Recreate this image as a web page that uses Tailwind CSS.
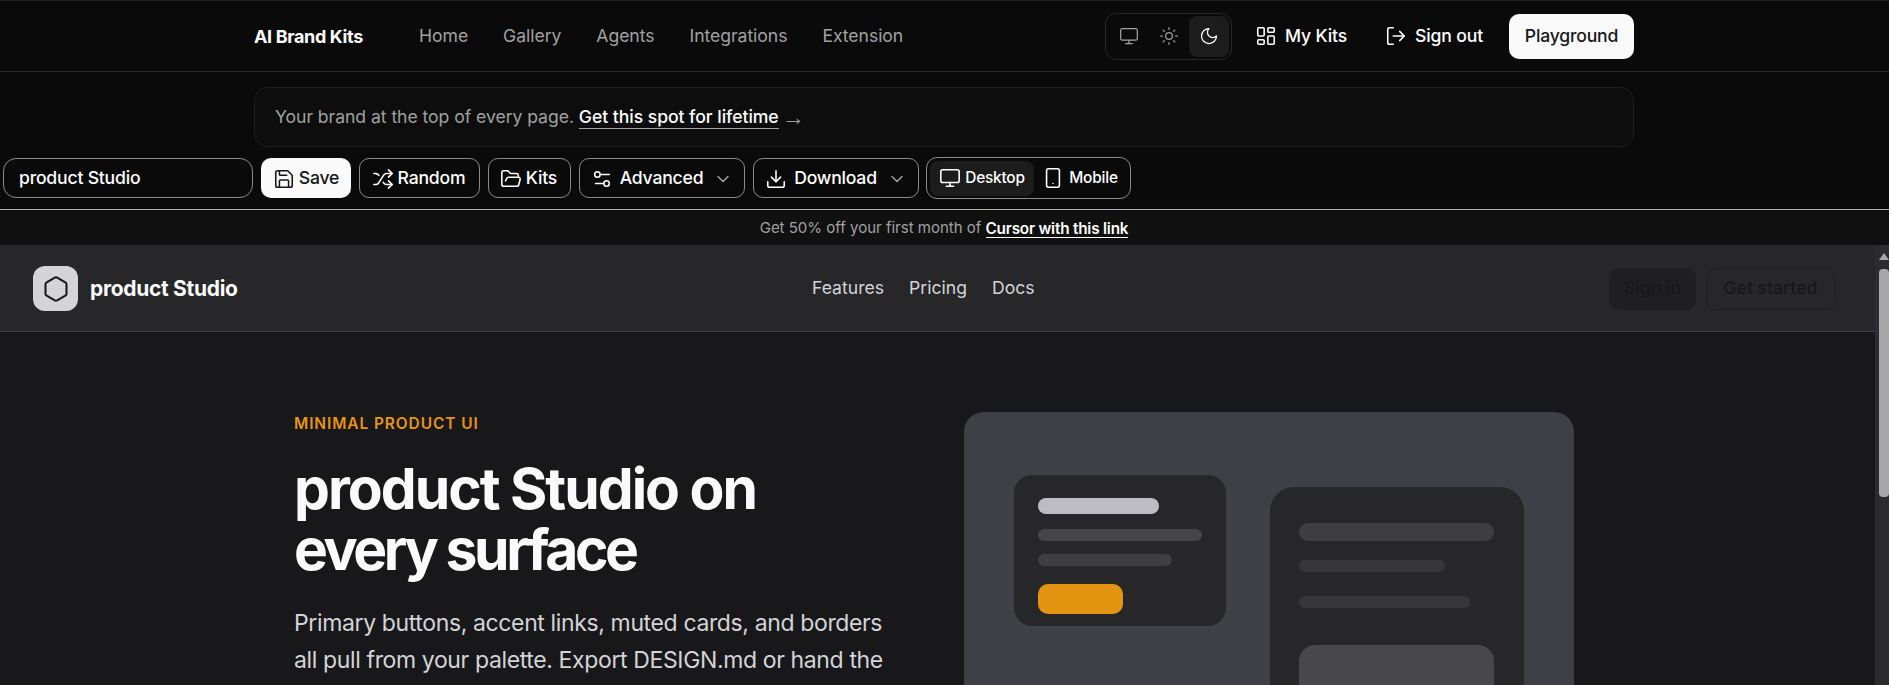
<!DOCTYPE html>
<html lang="en">
<head>
    <meta charset="UTF-8">
    <meta name="viewport" content="width=device-width, initial-scale=1.0">
    <title>AI Brand Kits</title>
    <script src="https://cdn.jsdelivr.net/npm/@tailwindcss/browser@4"></script>
</head>
<body class="bg-[#0a0a0a] font-['Inter',sans-serif] text-white">
<div class="h-[685px] w-[1889px] overflow-hidden flex flex-col">

    <!-- Site header -->
    <header class="h-[72px] shrink-0 border-t border-b border-t-[#1f1f1f] border-b-[#262626] flex items-center justify-between pl-[254px] pr-[255px]">
        <div class="flex items-center">
            <span class="w-[111px] text-[18px] font-bold tracking-[-0.35px] whitespace-nowrap">AI Brand Kits</span>
            <nav class="ml-[54px] flex items-center gap-[35px] text-[17.6px] tracking-[-0.05px] text-[#a1a1a1]">
                <a>Home</a>
                <a>Gallery</a>
                <a>Agents</a>
                <a>Integrations</a>
                <a>Extension</a>
            </nav>
        </div>
        <div class="flex items-center">
            <div class="h-[47px] w-[127px] border border-[#262626] rounded-[11px] flex items-center pl-[3px] text-[#a1a1a1]">
                <span class="w-[40px] h-[41px] flex items-center justify-center">
                    <svg class="w-[20px] h-[20px]" viewBox="0 0 24 24" fill="none" stroke="currentColor" stroke-width="1.5" stroke-linecap="round" stroke-linejoin="round"><rect x="2" y="3" width="20" height="14" rx="2"/><path d="M8 21h8M12 17v4"/></svg>
                </span>
                <span class="w-[40px] h-[41px] flex items-center justify-center">
                    <svg class="w-[20px] h-[20px]" viewBox="0 0 24 24" fill="none" stroke="currentColor" stroke-width="1.5" stroke-linecap="round" stroke-linejoin="round"><circle cx="12" cy="12" r="4"/><path d="M12 2v2M12 20v2M4.93 4.93l1.41 1.41M17.66 17.66l1.41 1.41M2 12h2M20 12h2M6.34 17.66l-1.41 1.41M19.07 4.93l-1.41 1.41"/></svg>
                </span>
                <span class="w-[40px] h-[41px] rounded-[8px] bg-[#1c1c1c] text-white flex items-center justify-center">
                    <svg class="w-[20px] h-[20px]" viewBox="0 0 24 24" fill="none" stroke="currentColor" stroke-width="1.5" stroke-linecap="round" stroke-linejoin="round"><path d="M12 3a6 6 0 0 0 9 9 9 9 0 1 1-9-9Z"/></svg>
                </span>
            </div>
            <a class="ml-[23px] flex items-center gap-[8px] text-[17.6px] font-medium tracking-[-0.15px]">
                <svg class="w-[22px] h-[22px]" viewBox="0 0 24 24" fill="none" stroke="currentColor" stroke-width="1.7" stroke-linecap="round" stroke-linejoin="round"><rect x="3" y="3" width="7" height="9" rx="1"/><rect x="14" y="3" width="7" height="5" rx="1"/><rect x="14" y="12" width="7" height="9" rx="1"/><rect x="3" y="16" width="7" height="5" rx="1"/></svg>
                My Kits
            </a>
            <a class="ml-[38px] flex items-center gap-[8px] text-[17.6px] font-medium tracking-[-0.15px]">
                <svg class="w-[22px] h-[22px]" viewBox="0 0 24 24" fill="none" stroke="currentColor" stroke-width="1.7" stroke-linecap="round" stroke-linejoin="round"><path d="M9 21H5a2 2 0 0 1-2-2V5a2 2 0 0 1 2-2h4"/><path d="m16 17 5-5-5-5"/><path d="M21 12H9"/></svg>
                Sign out
            </a>
            <a class="ml-[26px] h-[45px] w-[125px] rounded-[10px] bg-[#fafafa] text-[#171717] text-[17.6px] font-medium tracking-[-0.2px] flex items-center justify-center">Playground</a>
        </div>
    </header>

    <!-- Sponsor banner -->
    <div class="shrink-0 pt-[15px] pl-[254px] pr-[255px]">
        <div class="h-[60px] rounded-[13px] border border-[#1f1f1f] bg-[#0d0d0d] flex items-center pl-[20px] text-[17.6px] tracking-[-0.05px] text-[#a1a1a1] whitespace-nowrap">
            Your brand at the top of every page.&nbsp;<a class="text-white font-medium border-b border-[#a1a1a1] leading-[22px]">Get this spot for lifetime</a><span class="ml-[3px] font-['Liberation_Sans',sans-serif] text-[23px] leading-[22px]">→</span>
        </div>
    </div>

    <!-- Toolbar -->
    <div class="h-[63px] shrink-0 border-b border-[#b0b0b0] flex items-start pl-[3px] pt-[10px] gap-[8px] text-[17.6px] font-medium tracking-[-0.2px]">
        <div class="mt-[1px] h-[40px] w-[250px] rounded-[13px] border border-[#8a8a8a] flex items-center pl-[15px] pt-[1px]">product Studio</div>
        <button class="mt-[1px] h-[40px] w-[90px] rounded-[10px] bg-[#fafafa] text-[#171717] flex items-center justify-center gap-[4px] pt-[1px]">
            <svg class="w-[22px] h-[22px]" viewBox="0 0 24 24" fill="none" stroke="currentColor" stroke-width="1.7" stroke-linecap="round" stroke-linejoin="round"><path d="M15.2 3a2 2 0 0 1 1.4.6l3.8 3.8a2 2 0 0 1 .6 1.4V19a2 2 0 0 1-2 2H5a2 2 0 0 1-2-2V5a2 2 0 0 1 2-2z"/><path d="M17 21v-7a1 1 0 0 0-1-1H8a1 1 0 0 0-1 1v7"/><path d="M7 3v4a1 1 0 0 0 1 1h7"/></svg>
            Save
        </button>
        <button class="mt-[1px] h-[40px] w-[121px] rounded-[10px] border border-[#8a8a8a] flex items-center justify-center gap-[4px] pr-[2px] pt-[1px]">
            <svg class="w-[22px] h-[22px]" viewBox="0 0 24 24" fill="none" stroke="currentColor" stroke-width="1.7" stroke-linecap="round" stroke-linejoin="round"><path d="m18 14 4 4-4 4"/><path d="m18 2 4 4-4 4"/><path d="M2 18h1.973a4 4 0 0 0 3.3-1.7l5.454-8.6a4 4 0 0 1 3.3-1.7H22"/><path d="M2 6h1.972a4 4 0 0 1 3.6 2.2"/><path d="M22 18h-6.041a4 4 0 0 1-3.3-1.8l-.359-.45"/></svg>
            Random
        </button>
        <button class="mt-[1px] h-[40px] w-[83px] rounded-[10px] border border-[#8a8a8a] flex items-center justify-center gap-[4px] pr-[2px] pt-[1px]">
            <svg class="w-[22px] h-[22px]" viewBox="0 0 24 24" fill="none" stroke="currentColor" stroke-width="1.7" stroke-linecap="round" stroke-linejoin="round"><path d="m6 14 1.5-2.9A2 2 0 0 1 9.24 10H20a2 2 0 0 1 1.94 2.5l-1.54 6a2 2 0 0 1-1.95 1.5H4a2 2 0 0 1-2-2V5a2 2 0 0 1 2-2h3.9a2 2 0 0 1 1.69.9l.81 1.2a2 2 0 0 0 1.67.9H18a2 2 0 0 1 2 2v2"/></svg>
            Kits
        </button>
        <button class="mt-[1px] h-[40px] w-[166px] rounded-[10px] border border-[#8a8a8a] flex items-center justify-center gap-[7px] pt-[1px]">
            <svg class="w-[22px] h-[22px]" viewBox="0 0 24 24" fill="none" stroke="currentColor" stroke-width="1.7" stroke-linecap="round" stroke-linejoin="round"><path d="M20 7h-9"/><path d="M14 17H5"/><circle cx="17" cy="17" r="3"/><circle cx="7" cy="7" r="3"/></svg>
            Advanced
            <svg class="ml-[3px] w-[20px] h-[20px] text-[#a1a1a1]" viewBox="0 0 24 24" fill="none" stroke="currentColor" stroke-width="1.7" stroke-linecap="round" stroke-linejoin="round"><path d="m6 9 6 6 6-6"/></svg>
        </button>
        <button class="mt-[1px] h-[40px] w-[166px] rounded-[10px] border border-[#8a8a8a] flex items-center justify-center gap-[7px] pt-[1px]">
            <svg class="w-[22px] h-[22px]" viewBox="0 0 24 24" fill="none" stroke="currentColor" stroke-width="1.7" stroke-linecap="round" stroke-linejoin="round"><path d="M12 15V3"/><path d="M21 15v4a2 2 0 0 1-2 2H5a2 2 0 0 1-2-2v-4"/><path d="m7 10 5 5 5-5"/></svg>
            Download
            <svg class="ml-[3px] w-[20px] h-[20px] text-[#a1a1a1]" viewBox="0 0 24 24" fill="none" stroke="currentColor" stroke-width="1.7" stroke-linecap="round" stroke-linejoin="round"><path d="m6 9 6 6 6-6"/></svg>
        </button>
        <div class="ml-[-1px] h-[42px] w-[205px] rounded-[11px] border border-[#8a8a8a] flex items-center pl-[3px] text-[15.4px] font-medium tracking-[-0.2px]">
            <span class="h-[35px] w-[104px] rounded-[8px] bg-[#1c1c1c] flex items-center justify-center gap-[4px]">
                <svg class="w-[22px] h-[22px]" viewBox="0 0 24 24" fill="none" stroke="currentColor" stroke-width="1.7" stroke-linecap="round" stroke-linejoin="round"><rect x="2" y="3" width="20" height="14" rx="2"/><path d="M8 21h8M12 17v4"/></svg>
                Desktop
            </span>
            <span class="h-[35px] w-[92px] flex items-center justify-center gap-[5px]">
                <svg class="w-[22px] h-[22px]" viewBox="0 0 24 24" fill="none" stroke="currentColor" stroke-width="1.7" stroke-linecap="round" stroke-linejoin="round"><rect x="5" y="2" width="14" height="20" rx="2"/><path d="M12 18h.01"/></svg>
                Mobile
            </span>
        </div>
    </div>

    <!-- Promo strip -->
    <div class="h-[35px] shrink-0 bg-[#101010] flex items-center justify-center pr-[1px] pt-[2px] text-[15px] text-[#a1a1a1] whitespace-nowrap">
        Get 50% off your first month of&nbsp;<a class="text-white text-[15.3px] font-semibold border-b border-white leading-[17px] tracking-[-0.2px]">Cursor with this link</a>
    </div>

    <!-- Kit preview -->
    <div class="flex-1 min-h-0 flex bg-[#2c2c2e]">
        <div class="flex-1 min-w-0 bg-[#18181b] overflow-hidden">
            <div class="h-[87px] bg-[#27272a] border-b border-[#3f3f46] flex items-center pt-[1px] pl-[33px] pr-[40px]">
                <div class="w-[300px] shrink-0 flex items-center gap-[12px]">
                    <span class="w-[45px] h-[45px] rounded-[12px] bg-[#d4d4d8] text-[#18181b] flex items-center justify-center">
                        <svg class="w-[28px] h-[28px]" viewBox="0 0 24 24" fill="none" stroke="currentColor" stroke-width="1.75" stroke-linecap="round" stroke-linejoin="round"><path d="M21 16V8a2 2 0 0 0-1-1.73l-7-4a2 2 0 0 0-2 0l-7 4A2 2 0 0 0 3 8v8a2 2 0 0 0 1 1.73l7 4a2 2 0 0 0 2 0l7-4A2 2 0 0 0 21 16z"/></svg>
                    </span>
                    <span class="text-[21px] font-bold tracking-[-0.3px] text-[#fafafa] whitespace-nowrap">product Studio</span>
                </div>
                <nav class="ml-[479px] flex items-center gap-[25px] text-[17.6px] text-[#d4d4d8]">
                    <a>Features</a>
                    <a>Pricing</a>
                    <a>Docs</a>
                </nav>
                <div class="ml-auto flex items-center gap-[10px] text-[17.6px] font-semibold tracking-[-0.1px] text-[#18181b]">
                    <a class="h-[42px] w-[87px] rounded-[10px] bg-[#1f1f22] flex items-center justify-center">Sign in</a>
                    <a class="h-[42px] w-[129px] rounded-[10px] border border-[#1f1f22] flex items-center justify-center">Get started</a>
                </div>
            </div>

            <section class="flex pl-[294px] pt-[82px]">
                <div class="w-[600px] shrink-0">
                    <p class="text-[15.4px] leading-[20px] font-semibold tracking-[0.95px] text-[#e8960f]">MINIMAL PRODUCT UI</p>
                    <h1 class="mt-[24px] text-[57px] leading-[61px] font-bold text-[#fafafa] whitespace-nowrap">
                        <span class="block tracking-[-2.0px]">product Studio on</span>
                        <span class="block tracking-[-3.4px]">every surface</span>
                    </h1>
                    <p class="mt-[25px] text-[23px] leading-[37px] tracking-[-0.37px] text-[#d4d4d8] whitespace-nowrap">Primary buttons, accent links, muted cards, and borders<br>all pull from your palette. Export DESIGN.md or hand the</p>
                </div>
                <div class="ml-[70px] mt-[-2px] w-[610px] h-[400px] shrink-0 rounded-[20px] bg-[#3f3f46] flex items-start pl-[50px]">
                    <div class="mt-[63px] w-[212px] h-[151px] rounded-[18px] bg-[#27272a] pl-[24px] pt-[23px]">
                        <div class="h-[16px] w-[121px] rounded-full bg-[#bcbcc2]"></div>
                        <div class="mt-[15px] h-[12px] w-[164px] rounded-full bg-[#46464a]"></div>
                        <div class="mt-[13px] h-[12px] w-[134px] rounded-full bg-[#3f3f43]"></div>
                        <div class="mt-[18px] h-[30px] w-[85px] rounded-[10px] bg-[#e39410]"></div>
                    </div>
                    <div class="ml-[44px] mt-[75px] w-[254px] h-[320px] rounded-[24px] bg-[#27272a] pl-[29px] pt-[36px]">
                        <div class="h-[18px] w-[195px] rounded-full bg-[#3f3f43]"></div>
                        <div class="mt-[19px] h-[12px] w-[146px] rounded-full bg-[#37373a]"></div>
                        <div class="mt-[24px] h-[12px] w-[171px] rounded-full bg-[#37373a]"></div>
                        <div class="mt-[37px] h-[120px] w-[195px] rounded-[16px] bg-[#48484c]"></div>
                    </div>
                </div>
            </section>
        </div>
        <!-- Scrollbar -->
        <div class="w-[14px] shrink-0 pl-[4px] flex flex-col items-center pt-[8px]">
            <div class="w-0 h-0 border-l-[5px] border-r-[5px] border-b-[7px] border-l-transparent border-r-transparent border-b-[#a8a8a8]"></div>
            <div class="mt-[9px] h-[228px] w-[10px] rounded-[4px] bg-[#a8a8a8]"></div>
        </div>
    </div>
</div>
</body>
</html>
